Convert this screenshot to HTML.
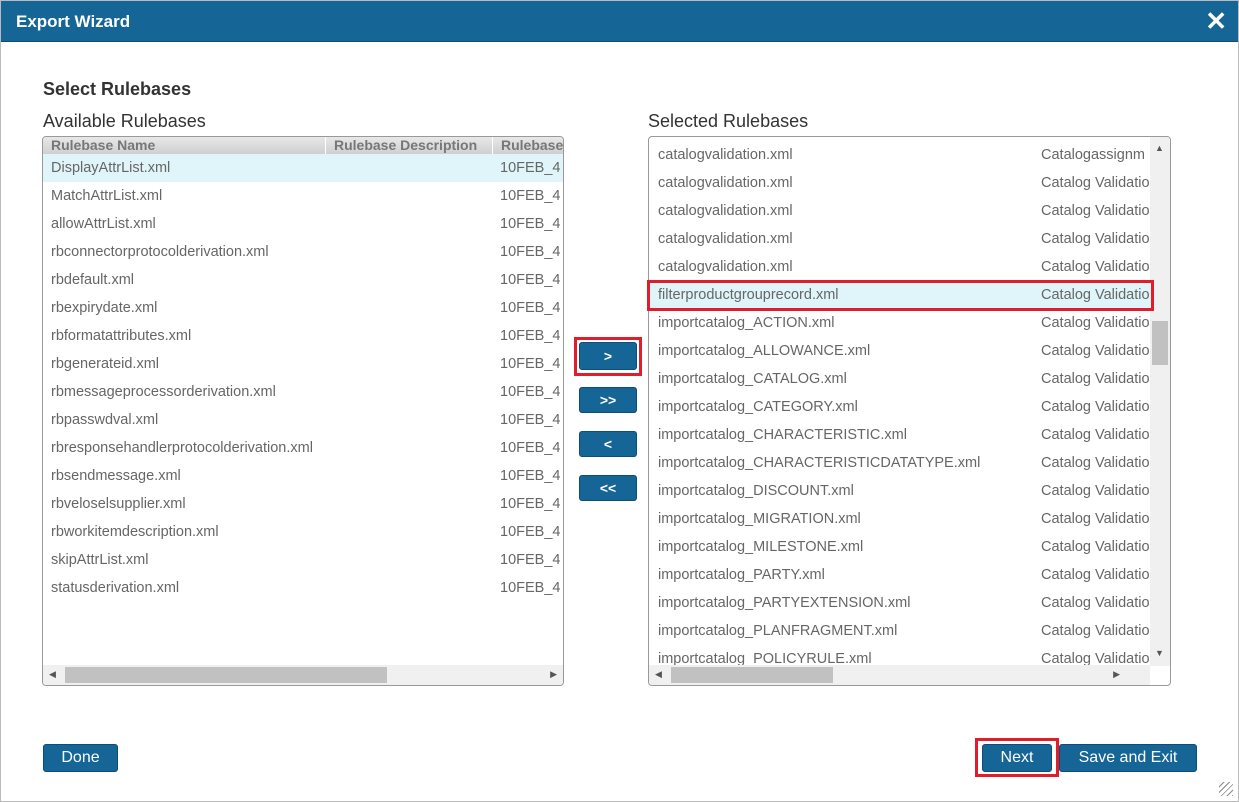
<!DOCTYPE html>
<html><head><style>
*{box-sizing:border-box;margin:0;padding:0}
body{width:1239px;height:802px;background:#fff;font-family:"Liberation Sans",sans-serif;position:relative;overflow:hidden}
.frame{position:absolute;left:0;top:0;width:1239px;height:802px;border:1px solid #bbb;pointer-events:none}
.hdr{position:absolute;left:0;top:0;width:1239px;height:42px;background:#156597;color:#fff;font-weight:bold;font-size:17px;padding:12px 0 0 16px;border-bottom:1px solid #0e4d75}
.x{position:absolute;right:12px;top:6px;font-size:26px;font-weight:bold;color:#fff}
.t{position:absolute;color:#333;font-size:18px}
.box{position:absolute;border:1px solid #999;border-radius:4px;overflow:hidden;background:#fff}
.row{position:absolute;left:0;height:28px;font-size:14.5px;color:#666;line-height:28px;white-space:nowrap;width:100%}
.row span{position:absolute}
.hscroll{position:absolute;left:0;bottom:0;height:20px;background:#f0f0f0;width:100%}
.thumb{position:absolute;background:#c1c1c1}
.btn{position:absolute;background:#156597;color:#fff;border-radius:3px;border:1px solid #0e4d75;text-align:center;font-size:16px}
.red{position:absolute;border:3px solid #e21d2b}
.ar{position:absolute;font-size:9px;color:#555}
</style></head><body>
<div class="hdr">Export Wizard<span class="x">✕</span></div>
<div class="t" style="left:43px;top:79px;font-weight:bold">Select Rulebases</div>
<div class="t" style="left:43px;top:111px">Available Rulebases</div>
<div class="t" style="left:648px;top:111px">Selected Rulebases</div>

<div class="box" style="left:42px;top:136px;width:522px;height:550px">
 <div style="position:absolute;left:0;top:0;width:100%;height:18px;background:linear-gradient(#e8e8e8,#cfcfcf);border-bottom:1px solid #aaa;font-size:14px;font-weight:bold;color:#777;line-height:17px">
  <span style="position:absolute;left:8px">Rulebase Name</span>
  <span style="position:absolute;left:282px;border-left:1px solid #fff;padding-left:8px;height:18px">Rulebase Description</span>
  <span style="position:absolute;left:449px;border-left:1px solid #fff;padding-left:8px;height:18px">Rulebase</span>
 </div>
 <div class="row" style="top:17px;background:#dff5f9"><span style="left:8px">DisplayAttrList.xml</span><span style="left:457px">10FEB_4</span></div>
 <div class="row" style="top:45px"><span style="left:8px">MatchAttrList.xml</span><span style="left:457px">10FEB_4</span></div>
 <div class="row" style="top:73px"><span style="left:8px">allowAttrList.xml</span><span style="left:457px">10FEB_4</span></div>
 <div class="row" style="top:101px"><span style="left:8px">rbconnectorprotocolderivation.xml</span><span style="left:457px">10FEB_4</span></div>
 <div class="row" style="top:129px"><span style="left:8px">rbdefault.xml</span><span style="left:457px">10FEB_4</span></div>
 <div class="row" style="top:157px"><span style="left:8px">rbexpirydate.xml</span><span style="left:457px">10FEB_4</span></div>
 <div class="row" style="top:185px"><span style="left:8px">rbformatattributes.xml</span><span style="left:457px">10FEB_4</span></div>
 <div class="row" style="top:213px"><span style="left:8px">rbgenerateid.xml</span><span style="left:457px">10FEB_4</span></div>
 <div class="row" style="top:241px"><span style="left:8px">rbmessageprocessorderivation.xml</span><span style="left:457px">10FEB_4</span></div>
 <div class="row" style="top:269px"><span style="left:8px">rbpasswdval.xml</span><span style="left:457px">10FEB_4</span></div>
 <div class="row" style="top:297px"><span style="left:8px">rbresponsehandlerprotocolderivation.xml</span><span style="left:457px">10FEB_4</span></div>
 <div class="row" style="top:325px"><span style="left:8px">rbsendmessage.xml</span><span style="left:457px">10FEB_4</span></div>
 <div class="row" style="top:353px"><span style="left:8px">rbveloselsupplier.xml</span><span style="left:457px">10FEB_4</span></div>
 <div class="row" style="top:381px"><span style="left:8px">rbworkitemdescription.xml</span><span style="left:457px">10FEB_4</span></div>
 <div class="row" style="top:409px"><span style="left:8px">skipAttrList.xml</span><span style="left:457px">10FEB_4</span></div>
 <div class="row" style="top:437px"><span style="left:8px">statusderivation.xml</span><span style="left:457px">10FEB_4</span></div>
 <div class="hscroll"><div class="thumb" style="left:22px;top:2px;width:322px;height:16px"></div><span class="ar" style="left:6px;top:4px">◀</span><span class="ar" style="right:6px;top:4px">▶</span></div>
</div>

<div class="box" style="left:648px;top:136px;width:523px;height:550px">
 <div class="row" style="top:4px"><span style="left:9px">catalogvalidation.xml</span><span style="left:392px">Catalogassignm</span></div>
 <div class="row" style="top:32px"><span style="left:9px">catalogvalidation.xml</span><span style="left:392px">Catalog Validatio</span></div>
 <div class="row" style="top:60px"><span style="left:9px">catalogvalidation.xml</span><span style="left:392px">Catalog Validatio</span></div>
 <div class="row" style="top:88px"><span style="left:9px">catalogvalidation.xml</span><span style="left:392px">Catalog Validatio</span></div>
 <div class="row" style="top:116px"><span style="left:9px">catalogvalidation.xml</span><span style="left:392px">Catalog Validatio</span></div>
 <div class="row" style="top:144px;background:#dff5f9"><span style="left:9px">filterproductgrouprecord.xml</span><span style="left:392px">Catalog Validatio</span></div>
 <div class="row" style="top:172px"><span style="left:9px">importcatalog_ACTION.xml</span><span style="left:392px">Catalog Validatio</span></div>
 <div class="row" style="top:200px"><span style="left:9px">importcatalog_ALLOWANCE.xml</span><span style="left:392px">Catalog Validatio</span></div>
 <div class="row" style="top:228px"><span style="left:9px">importcatalog_CATALOG.xml</span><span style="left:392px">Catalog Validatio</span></div>
 <div class="row" style="top:256px"><span style="left:9px">importcatalog_CATEGORY.xml</span><span style="left:392px">Catalog Validatio</span></div>
 <div class="row" style="top:284px"><span style="left:9px">importcatalog_CHARACTERISTIC.xml</span><span style="left:392px">Catalog Validatio</span></div>
 <div class="row" style="top:312px"><span style="left:9px">importcatalog_CHARACTERISTICDATATYPE.xml</span><span style="left:392px">Catalog Validatio</span></div>
 <div class="row" style="top:340px"><span style="left:9px">importcatalog_DISCOUNT.xml</span><span style="left:392px">Catalog Validatio</span></div>
 <div class="row" style="top:368px"><span style="left:9px">importcatalog_MIGRATION.xml</span><span style="left:392px">Catalog Validatio</span></div>
 <div class="row" style="top:396px"><span style="left:9px">importcatalog_MILESTONE.xml</span><span style="left:392px">Catalog Validatio</span></div>
 <div class="row" style="top:424px"><span style="left:9px">importcatalog_PARTY.xml</span><span style="left:392px">Catalog Validatio</span></div>
 <div class="row" style="top:452px"><span style="left:9px">importcatalog_PARTYEXTENSION.xml</span><span style="left:392px">Catalog Validatio</span></div>
 <div class="row" style="top:480px"><span style="left:9px">importcatalog_PLANFRAGMENT.xml</span><span style="left:392px">Catalog Validatio</span></div>
 <div class="row" style="top:508px"><span style="left:9px">importcatalog_POLICYRULE.xml</span><span style="left:392px">Catalog Validatio</span></div>
 <div style="position:absolute;left:501px;top:0;width:20px;height:529px;background:#f0f0f0"><div class="thumb" style="left:2px;top:184px;width:16px;height:44px"></div><span class="ar" style="left:5px;top:6px">▲</span><span class="ar" style="left:5px;bottom:8px">▼</span></div>
 <div class="hscroll" style="width:501px"><div class="thumb" style="left:22px;top:2px;width:162px;height:16px"></div><span class="ar" style="left:6px;top:4px">◀</span><span class="ar" style="right:30px;top:4px">▶</span></div>
</div>
<div class="red" style="left:647px;top:280px;width:507px;height:31px"></div>

<div class="red" style="left:574px;top:337px;width:68px;height:39px"></div>
<div class="btn" style="left:579px;top:342px;width:58px;height:28px;line-height:26px;font-size:14px;font-weight:bold">&gt;</div>
<div class="btn" style="left:579px;top:387px;width:58px;height:26px;line-height:24px;font-size:14px;font-weight:bold">&gt;&gt;</div>
<div class="btn" style="left:579px;top:431px;width:58px;height:26px;line-height:24px;font-size:14px;font-weight:bold">&lt;</div>
<div class="btn" style="left:579px;top:475px;width:58px;height:26px;line-height:24px;font-size:14px;font-weight:bold">&lt;&lt;</div>

<div class="btn" style="left:43px;top:744px;width:75px;height:28px;line-height:26px">Done</div>
<div class="red" style="left:975px;top:738px;width:84px;height:39px"></div>
<div class="btn" style="left:982px;top:744px;width:70px;height:28px;line-height:26px">Next</div>
<div class="btn" style="left:1059px;top:744px;width:138px;height:28px;line-height:26px">Save and Exit</div>
<div style="position:absolute;right:6px;bottom:6px;width:14px;height:14px;background:repeating-linear-gradient(135deg,transparent 0 3px,#888 3px 4px)"></div>
<div class="frame"></div>
</body></html>
